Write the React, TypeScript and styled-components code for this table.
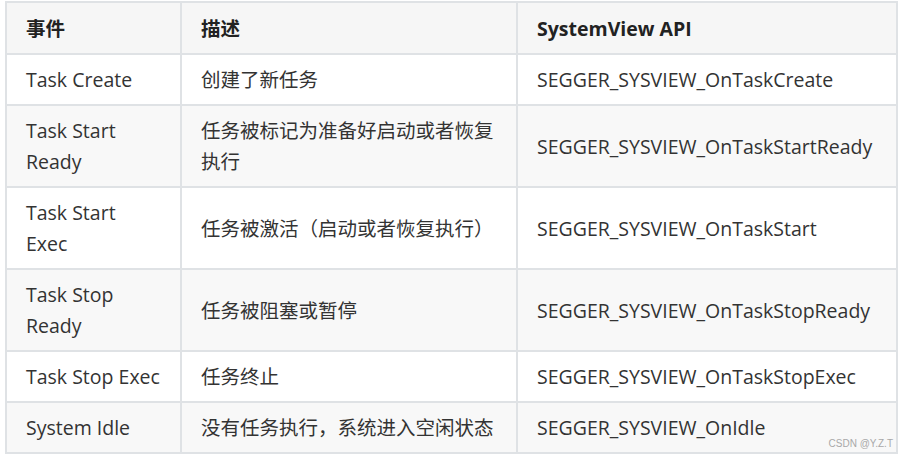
import React from "react";
import styled, { createGlobalStyle } from "styled-components";

const GlobalStyle = createGlobalStyle`
  html, body {
    margin: 0;
    padding: 0;
    background: #ffffff;
  }
`;

const Page = styled.div`
  position: relative;
  width: 909px;
  height: 460px;
  padding: 1px 0 0 5px;
  box-sizing: border-box;
  font-family: "Open Sans", "Noto Sans CJK SC", sans-serif;
`;

const Table = styled.table`
  border-collapse: collapse;
  table-layout: fixed;
  width: 891px;
  font-size: 19.5px;
  line-height: 31px;
  color: #333333;
`;

const Row = styled.tr<{ $shaded?: boolean }>`
  background: ${(props) => (props.$shaded ? "#f8f8f8" : "#ffffff")};
`;

const HeadCell = styled.th`
  border: 2px solid #dfe2e5;
  padding: 9.5px 19px;
  text-align: left;
  font-weight: 700;
  color: #222222;
  background: #f6f6f6;
`;

const Cell = styled.td`
  border: 2px solid #dfe2e5;
  padding: 9px 19px;
  text-align: left;
  vertical-align: middle;
  word-break: break-word;
`;

const Watermark = styled.span`
  position: absolute;
  right: 16px;
  bottom: 10px;
  font-family: "Liberation Sans", Arial, sans-serif;
  font-size: 10px;
  line-height: 12px;
  color: #a8a8a8;
`;

const rows = [
  ["Task Create", "创建了新任务", "SEGGER_SYSVIEW_OnTaskCreate"],
  ["Task Start Ready", "任务被标记为准备好启动或者恢复执行", "SEGGER_SYSVIEW_OnTaskStartReady"],
  ["Task Start Exec", "任务被激活（启动或者恢复执行）", "SEGGER_SYSVIEW_OnTaskStart"],
  ["Task Stop Ready", "任务被阻塞或暂停", "SEGGER_SYSVIEW_OnTaskStopReady"],
  ["Task Stop Exec", "任务终止", "SEGGER_SYSVIEW_OnTaskStopExec"],
  ["System Idle", "没有任务执行，系统进入空闲状态", "SEGGER_SYSVIEW_OnIdle"],
];

const App = () => {
  return (
    <>
      <GlobalStyle />
      <Page>
        <Table>
          <colgroup>
            <col style={{ width: 175 }} />
            <col style={{ width: 336 }} />
            <col style={{ width: 380 }} />
          </colgroup>
          <thead>
            <Row $shaded>
              <HeadCell>事件</HeadCell>
              <HeadCell>描述</HeadCell>
              <HeadCell>SystemView API</HeadCell>
            </Row>
          </thead>
          <tbody>
            {rows.map((row, index) => (
              <Row key={index} $shaded={index % 2 === 1}>
                {row.map((text, i) => (
                  <Cell key={i}>{text}</Cell>
                ))}
              </Row>
            ))}
          </tbody>
        </Table>
        <Watermark>CSDN @Y.Z.T</Watermark>
      </Page>
    </>
  );
};

export default App;
